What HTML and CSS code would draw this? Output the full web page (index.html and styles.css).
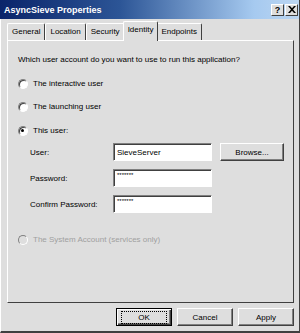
FILE: index.html
```html
<!DOCTYPE html>
<html lang="en">
<head>
    <meta charset="UTF-8">
    <title>AsyncSieve Properties</title>
    <link rel="stylesheet" href="styles.css">
</head>
<body>
    <div class="win">
        <div class="titlebar">
            <span class="title">AsyncSieve Properties</span>
            <div class="tbtns">
                <span class="tbtn">?</span>
                <span class="tbtn">
                    <svg width="8" height="7" viewBox="0 0 8 7"><path d="M0 0h2l2 2.3L6 0h2L5 3.5 8 7H6L4 4.7 2 7H0l3-3.5z" fill="#000"/></svg>
                </span>
            </div>
        </div>

        <div class="tabs">
            <div class="tab">General</div>
            <div class="tab">Location</div>
            <div class="tab">Security</div>
            <div class="tab active">Identity</div>
            <div class="tab">Endpoints</div>
        </div>

        <div class="panel">
            <p class="q">Which user account do you want to use to run this application?</p>

            <div class="opt o1"><span class="radio"></span>The interactive user</div>
            <div class="opt o2"><span class="radio"></span>The launching user</div>
            <div class="opt o3"><span class="radio on"></span>This user:</div>

            <div class="fields">
                <div class="row">
                    <span class="lbl">User:</span>
                    <div class="input">SieveServer</div>
                    <div class="btn browse">Browse...</div>
                </div>
                <div class="row">
                    <span class="lbl">Password:</span>
                    <div class="input pw">*******</div>
                </div>
                <div class="row">
                    <span class="lbl">Confirm Password:</span>
                    <div class="input pw">*******</div>
                </div>
            </div>

            <div class="opt o4 off"><span class="radio"></span>The System Account (services only)</div>
        </div>

        <div class="footer">
            <div class="btn default"><span class="focus">OK</span></div>
            <div class="btn">Cancel</div>
            <div class="btn">Apply</div>
        </div>
    </div>
</body>
</html>
```

FILE: styles.css
```css
body{
    margin: 0;
    background-color: #dedede;
    font-family: 'Liberation Sans', Arial, sans-serif;
    font-size: 8px;
    color: #000;
}

.win{
    width: 300px;
    height: 333px;
    box-sizing: border-box;
    background-color: #dedede;
    border-left: 1px solid #fff;
    border-right: 1px solid #404040;
    border-bottom: 2px solid #404040;
}

.titlebar{
    height: 19px;
    margin-left: -1px;
    display: flex;
    align-items: center;
    justify-content: space-between;
    background: linear-gradient(to right, #0a246a 0%, #2c5596 40%, #a6caf0 85%, #bcd6f2 100%);
}
.title{
    color: #fff;
    font-weight: bold;
    font-size: 9px;
    padding-left: 4px;
}
.tbtns{
    display: flex;
    gap: 1px;
    margin-right: 1px;
}
.tbtn{
    width: 13px;
    height: 12px;
    box-sizing: border-box;
    background-color: #dedede;
    border: 1px solid;
    border-color: #fff #404040 #404040 #fff;
    display: flex;
    align-items: center;
    justify-content: center;
    font-weight: bold;
    font-size: 9px;
}

.tabs{
    display: flex;
    align-items: flex-end;
    height: 21px;
    padding-left: 6px;
}
.tab{
    height: 17px;
    box-sizing: border-box;
    padding: 3px 4px 0 4px;
    border: 1px solid;
    border-color: #fff #404040 transparent #fff;
    border-bottom: none;
    border-radius: 2px 2px 0 0;
}
.tab.active{
    height: 20px;
    padding-top: 3px;
    margin: 0 -2px -1px -2px;
    position: relative;
    z-index: 1;
    background-color: #dedede;
}

.panel{
    margin-left: 6px;
    width: 287px;
    height: 263px;
    box-sizing: border-box;
    border: 1px solid;
    border-color: #fff #404040 #404040 #fff;
    padding: 12px 0 0 10px;
}
.q{
    margin: 0;
    line-height: 13px;
}

.opt{
    display: flex;
    align-items: center;
    height: 13px;
    line-height: 13px;
}
.o1{ margin-top: 11px; }
.o2{ margin-top: 10px; }
.o3{ margin-top: 11px; }
.o4{ margin-top: 20px; }
.opt.off{ color: #a0a0a0; }

.radio{
    width: 10px;
    height: 10px;
    box-sizing: border-box;
    border-radius: 50%;
    background-color: #fff;
    border: 1px solid;
    border-color: #808080 #fff #fff #808080;
    box-shadow: inset 1px 1px 0 #404040;
    margin-right: 5px;
    position: relative;
}
.radio.on::after{
    content: '';
    position: absolute;
    left: 2px;
    top: 2px;
    width: 3px;
    height: 3px;
    border-radius: 50%;
    background-color: #000;
}
.off .radio{
    background-color: #dedede;
    box-shadow: none;
}

.fields{
    margin-top: 6px;
    display: flex;
    flex-direction: column;
    gap: 8px;
}
.row{
    display: flex;
    align-items: center;
    height: 18px;
}
.lbl{
    width: 83px;
    padding-left: 12px;
}
.input{
    width: 99px;
    height: 18px;
    box-sizing: border-box;
    background-color: #fff;
    border: 1px solid;
    border-color: #808080 #fff #fff #808080;
    box-shadow: inset 1px 1px 0 #404040;
    padding: 3px 0 0 3px;
    line-height: 11px;
}
.input.pw{
    font-size: 6px;
    line-height: 6px;
    padding-top: 2px;
}

.btn{
    height: 18px;
    box-sizing: border-box;
    background-color: #dedede;
    border: 1px solid;
    border-color: #fff #404040 #404040 #fff;
    box-shadow: inset -1px -1px 0 #808080;
    display: flex;
    align-items: center;
    justify-content: center;
}
.browse{
    width: 64px;
    margin-left: 8px;
}

.footer{
    display: flex;
    justify-content: flex-end;
    gap: 5px;
    margin-top: 5px;
    padding-right: 5px;
}
.footer .btn{
    width: 56px;
}
.btn.default{
    border: 1px solid #000;
    box-shadow: inset 1px 1px 0 #fff, inset -1px -1px 0 #404040, inset -2px -2px 0 #808080;
}
.focus{
    width: 44px;
    height: 11px;
    line-height: 11px;
    text-align: center;
    outline: 1px dotted #000;
}
```
